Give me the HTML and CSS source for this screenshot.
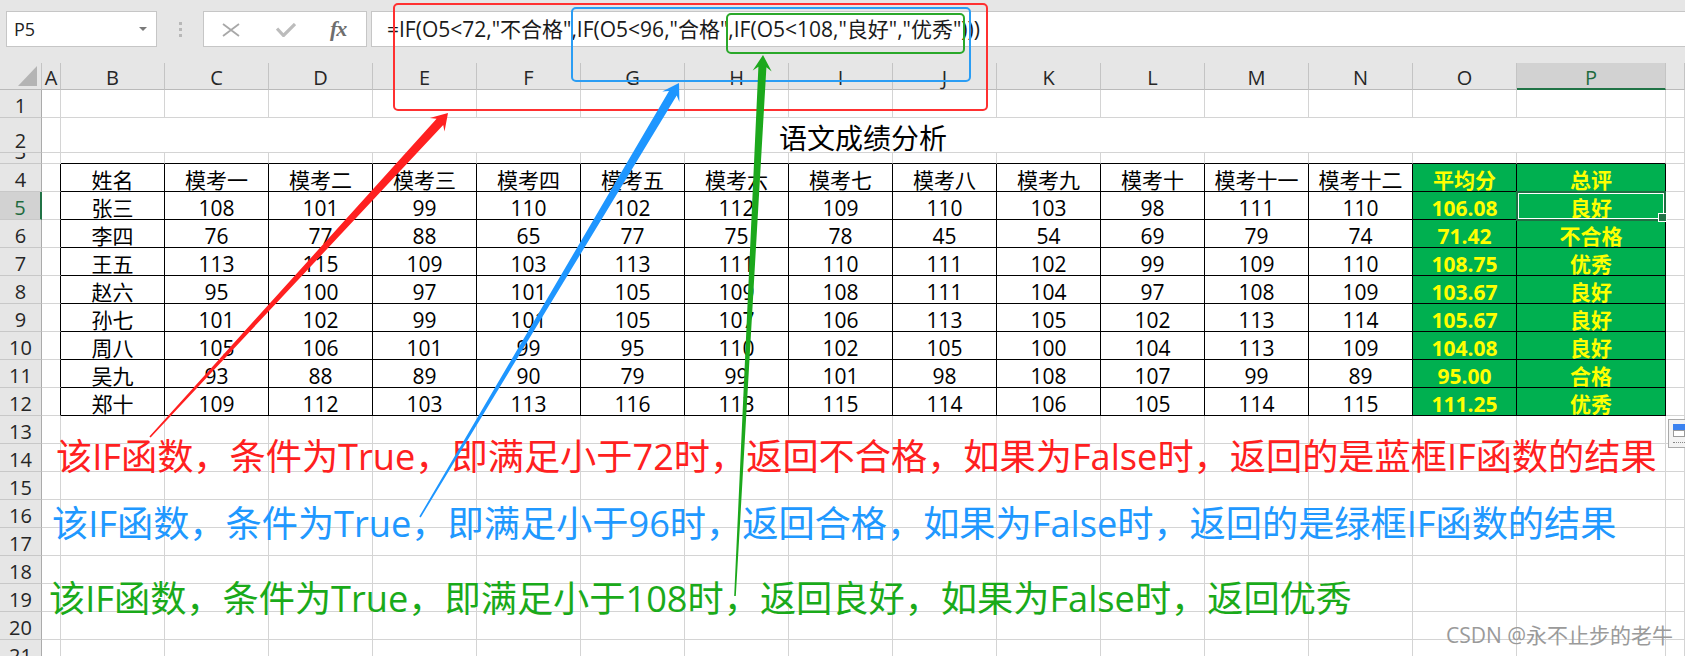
FILE: index.html
```html
<!DOCTYPE html>
<html lang="zh-CN">
<head>
<meta charset="utf-8">
<title>语文成绩分析</title>
<link rel="stylesheet" href="styles.css">
</head>
<body>
<div class="app">
  <div class="fbar">
    <div class="namebox"><span class="ref">P5</span><span class="dd"></span></div>
    <div class="grip"><span></span><span></span><span></span></div>
    <div class="fbtns">
      <svg class="ico-x" width="18" height="14" viewBox="0 0 18 14"><path d="M1 1 L17 13 M17 1 L1 13"/></svg>
      <svg class="ico-ok" width="20" height="14" viewBox="0 0 20 14"><path d="M1 5.5 L7.5 12.5 L19 1"/></svg>
      <span class="fx">fx</span>
    </div>
    <div class="finput">=IF(O5&lt;72,"不合格",IF(O5&lt;96,"合格",IF(O5&lt;108,"良好","优秀")))</div>
  </div>

  <div class="sheet">
    <div class="row hd">
      <div class="ch corner"></div>
      <div class="ch">A</div><div class="ch">B</div><div class="ch">C</div><div class="ch">D</div><div class="ch">E</div>
      <div class="ch">F</div><div class="ch">G</div><div class="ch">H</div><div class="ch">I</div><div class="ch">J</div>
      <div class="ch">K</div><div class="ch">L</div><div class="ch">M</div><div class="ch">N</div><div class="ch">O</div>
      <div class="ch sel">P</div><div class="ch"></div>
    </div>
    <div class="row"><div class="rh">1</div><i></i><i></i><i></i><i></i><i></i><i></i><i></i><i></i><i></i><i></i><i></i><i></i><i></i><i></i><i></i><i></i><i></i></div>
    <div class="row r2"><div class="rh">2</div><i></i><div class="title">语文成绩分析</div><i></i></div>
    <div class="row r3"><div class="rh">3</div><i></i><i class="bt"></i><i class="bt"></i><i class="bt"></i><i class="bt"></i><i class="bt"></i><i class="bt"></i><i class="bt"></i><i class="bt"></i><i class="bt"></i><i class="bt"></i><i class="bt"></i><i class="bt"></i><i class="bt"></i><i class="bt"></i><i class="bt"></i><i></i></div>
    <div class="row"><div class="rh">4</div><i class="br"></i><div class="t">姓名</div><div class="t">模考一</div><div class="t">模考二</div><div class="t">模考三</div><div class="t">模考四</div><div class="t">模考五</div><div class="t">模考六</div><div class="t">模考七</div><div class="t">模考八</div><div class="t">模考九</div><div class="t">模考十</div><div class="t">模考十一</div><div class="t">模考十二</div><div class="t g">平均分</div><div class="t g">总评</div><i></i></div>
    <div class="row"><div class="rh sel">5</div><i class="br"></i><div class="t">张三</div><div class="t">108</div><div class="t">101</div><div class="t">99</div><div class="t">110</div><div class="t">102</div><div class="t">112</div><div class="t">109</div><div class="t">110</div><div class="t">103</div><div class="t">98</div><div class="t">111</div><div class="t">110</div><div class="t g">106.08</div><div class="t g cur">良好</div><i></i></div>
    <div class="row"><div class="rh">6</div><i class="br"></i><div class="t">李四</div><div class="t">76</div><div class="t">77</div><div class="t">88</div><div class="t">65</div><div class="t">77</div><div class="t">75</div><div class="t">78</div><div class="t">45</div><div class="t">54</div><div class="t">69</div><div class="t">79</div><div class="t">74</div><div class="t g">71.42</div><div class="t g">不合格</div><i></i></div>
    <div class="row"><div class="rh">7</div><i class="br"></i><div class="t">王五</div><div class="t">113</div><div class="t">115</div><div class="t">109</div><div class="t">103</div><div class="t">113</div><div class="t">111</div><div class="t">110</div><div class="t">111</div><div class="t">102</div><div class="t">99</div><div class="t">109</div><div class="t">110</div><div class="t g">108.75</div><div class="t g">优秀</div><i></i></div>
    <div class="row"><div class="rh">8</div><i class="br"></i><div class="t">赵六</div><div class="t">95</div><div class="t">100</div><div class="t">97</div><div class="t">101</div><div class="t">105</div><div class="t">109</div><div class="t">108</div><div class="t">111</div><div class="t">104</div><div class="t">97</div><div class="t">108</div><div class="t">109</div><div class="t g">103.67</div><div class="t g">良好</div><i></i></div>
    <div class="row"><div class="rh">9</div><i class="br"></i><div class="t">孙七</div><div class="t">101</div><div class="t">102</div><div class="t">99</div><div class="t">101</div><div class="t">105</div><div class="t">107</div><div class="t">106</div><div class="t">113</div><div class="t">105</div><div class="t">102</div><div class="t">113</div><div class="t">114</div><div class="t g">105.67</div><div class="t g">良好</div><i></i></div>
    <div class="row"><div class="rh">10</div><i class="br"></i><div class="t">周八</div><div class="t">105</div><div class="t">106</div><div class="t">101</div><div class="t">99</div><div class="t">95</div><div class="t">110</div><div class="t">102</div><div class="t">105</div><div class="t">100</div><div class="t">104</div><div class="t">113</div><div class="t">109</div><div class="t g">104.08</div><div class="t g">良好</div><i></i></div>
    <div class="row"><div class="rh">11</div><i class="br"></i><div class="t">吴九</div><div class="t">93</div><div class="t">88</div><div class="t">89</div><div class="t">90</div><div class="t">79</div><div class="t">99</div><div class="t">101</div><div class="t">98</div><div class="t">108</div><div class="t">107</div><div class="t">99</div><div class="t">89</div><div class="t g">95.00</div><div class="t g">合格</div><i></i></div>
    <div class="row"><div class="rh">12</div><i class="br"></i><div class="t">郑十</div><div class="t">109</div><div class="t">112</div><div class="t">103</div><div class="t">113</div><div class="t">116</div><div class="t">113</div><div class="t">115</div><div class="t">114</div><div class="t">106</div><div class="t">105</div><div class="t">114</div><div class="t">115</div><div class="t g">111.25</div><div class="t g">优秀</div><i></i></div>
    <div class="row"><div class="rh">13</div><i></i><i></i><i></i><i></i><i></i><i></i><i></i><i></i><i></i><i></i><i></i><i></i><i></i><i></i><i></i><i></i><i></i></div>
    <div class="row"><div class="rh">14</div><i></i><i></i><i></i><i></i><i></i><i></i><i></i><i></i><i></i><i></i><i></i><i></i><i></i><i></i><i></i><i></i><i></i></div>
    <div class="row"><div class="rh">15</div><i></i><i></i><i></i><i></i><i></i><i></i><i></i><i></i><i></i><i></i><i></i><i></i><i></i><i></i><i></i><i></i><i></i></div>
    <div class="row"><div class="rh">16</div><i></i><i></i><i></i><i></i><i></i><i></i><i></i><i></i><i></i><i></i><i></i><i></i><i></i><i></i><i></i><i></i><i></i></div>
    <div class="row"><div class="rh">17</div><i></i><i></i><i></i><i></i><i></i><i></i><i></i><i></i><i></i><i></i><i></i><i></i><i></i><i></i><i></i><i></i><i></i></div>
    <div class="row"><div class="rh">18</div><i></i><i></i><i></i><i></i><i></i><i></i><i></i><i></i><i></i><i></i><i></i><i></i><i></i><i></i><i></i><i></i><i></i></div>
    <div class="row"><div class="rh">19</div><i></i><i></i><i></i><i></i><i></i><i></i><i></i><i></i><i></i><i></i><i></i><i></i><i></i><i></i><i></i><i></i><i></i></div>
    <div class="row"><div class="rh">20</div><i></i><i></i><i></i><i></i><i></i><i></i><i></i><i></i><i></i><i></i><i></i><i></i><i></i><i></i><i></i><i></i><i></i></div>
    <div class="row"><div class="rh">21</div><i></i><i></i><i></i><i></i><i></i><i></i><i></i><i></i><i></i><i></i><i></i><i></i><i></i><i></i><i></i><i></i><i></i></div>
  </div>

  <div class="note n1">该IF函数，条件为True，即满足小于72时，返回不合格，如果为False时，返回的是蓝框IF函数的结果</div>
  <div class="note n2">该IF函数，条件为True，即满足小于96时，返回合格，如果为False时，返回的是绿框IF函数的结果</div>
  <div class="note n3">该IF函数，条件为True，即满足小于108时，返回良好，如果为False时，返回优秀</div>

  <svg class="ann" width="1685" height="656" viewBox="0 0 1685 656">
    <rect class="box-red" x="394" y="4" width="593" height="106" rx="4"/>
    <rect class="box-blue" x="572" y="8" width="398" height="73" rx="4"/>
    <rect class="box-green" x="727" y="14" width="237" height="39" rx="4"/>
    <polygon class="arr-red" points="150.6,437.5 443.2,124.9 444.5,131.6 448,113 429.8,118 436.6,118.8 149.4,436.5"/>
    <polygon class="arr-blue" points="420.7,517.4 676.7,95.6 679.4,101.9 679,83 662.2,91.6 669,91 419.3,516.6"/>
    <polygon class="arr-green" points="735.8,596 766.4,67.2 771.7,71.5 763,55 752.7,70.5 758.4,66.8 734.2,596"/>
  </svg>

  <div class="wm">CSDN @永不止步的老牛</div>
  <div class="qa"><span class="qa-top"></span><span class="qa-mid"></span><span class="qa-dots"></span></div>
</div>
</body>
</html>
```

FILE: styles.css
```css
* { box-sizing: border-box; }
html, body { margin: 0; padding: 0; }
body {
  width: 1685px;
  height: 656px;
  overflow: hidden;
  background: #fff;
  font-family: "Open Sans", "Noto Sans CJK SC", sans-serif;
  color: #000;
}
.app { position: relative; width: 1685px; height: 656px; overflow: hidden; }

/* ---------- formula bar ---------- */
.fbar {
  height: 63px;
  background: #e6e6e6;
  display: flex;
  align-items: flex-start;
  padding: 11px 0 0 6px;
}
.namebox {
  width: 151px;
  height: 36px;
  background: #fff;
  border: 1px solid #c6c6c6;
  display: flex;
  align-items: center;
  justify-content: space-between;
  padding: 0 9px 0 7px;
  font-size: 18px;
  color: #222;
}
.dd {
  width: 0; height: 0;
  border-left: 4px solid transparent;
  border-right: 4px solid transparent;
  border-top: 4px solid #7a7a7a;
}
.grip {
  width: 46px;
  height: 36px;
  display: flex;
  flex-direction: column;
  align-items: center;
  justify-content: center;
  gap: 3px;
}
.grip span { width: 3px; height: 3px; background: #b8b8b8; }
.fbtns {
  width: 164px;
  height: 36px;
  background: #fff;
  border: 1px solid #c6c6c6;
  display: flex;
  align-items: center;
  padding-left: 18px;
}
.ico-x { margin-top: 2px; }
.ico-x path { stroke: #a8a8a8; stroke-width: 1.8; fill: none; }
.ico-ok { margin-left: 36px; margin-top: 1px; }
.ico-ok path { stroke: #bcbcbc; stroke-width: 3.2; fill: none; }
.fx {
  margin-left: 34px;
  font-family: "Liberation Serif", serif;
  font-style: italic;
  font-weight: 700;
  font-size: 22px;
  color: #6e6e6e;
  letter-spacing: -1px;
}
.finput {
  margin-left: 4px;
  flex: 1;
  height: 36px;
  background: #fff;
  border: 1px solid #c6c6c6;
  border-right: none;
  padding-left: 15px;
  font-size: 21px;
  line-height: 34px;
  color: #1a1a1a;
  white-space: nowrap;
}

/* ---------- sheet grid ---------- */
.sheet { display: flex; flex-direction: column; }
.row {
  display: grid;
  grid-template-columns: 42px 19px repeat(14, 104px) 149px 1fr;
  height: 28px;
  flex: none;
}
.row.hd { height: 27px; }
.row.r2 { height: 35px; }
.row.r3 { height: 11px; }
.row > * {
  border-right: 1px solid #d4d4d4;
  border-bottom: 1px solid #d4d4d4;
  display: flex;
  justify-content: center;
  align-items: flex-end;
  line-height: 1;
  white-space: nowrap;
  font-style: normal;
  min-width: 0;
}
.row.r3 > * { overflow: hidden; }
.ch {
  background: #e6e6e6;
  border-right-color: #c4c4c4;
  border-bottom-color: #bababa;
  font-size: 20px;
  color: #262626;
  padding-bottom: 1px;
}
.ch.sel {
  background: #d2d2d2;
  color: #1e6b3f;
  border-bottom: 2px solid #217346;
  padding-bottom: 0;
}
.corner { position: relative; }
.corner::after {
  content: "";
  position: absolute;
  right: 4px;
  bottom: 3px;
  width: 19px;
  height: 20px;
  background: #b4b4b4;
  clip-path: polygon(100% 0, 100% 100%, 0 100%);
}
.rh {
  background: #e6e6e6;
  border-right-color: #ababab;
  border-bottom-color: #c8c8c8;
  font-size: 20px;
  color: #262626;
  padding-bottom: 1px;
}
.rh.sel {
  background: #d2d2d2;
  color: #1e6b3f;
  border-right: 2px solid #217346;
}
.title {
  grid-column: span 15;
  font-size: 28px;
  color: #000;
}
.bt { border-bottom-color: #000; }
.br { border-right-color: #000; }
.t {
  border-right-color: #000;
  border-bottom-color: #000;
  font-size: 21px;
  color: #000;
}
.g {
  background: #00b050;
  color: #ffff00;
  font-weight: 700;
}
.cur { position: relative; z-index: 2; }
.cur::after {
  content: "";
  position: absolute;
  left: -1px; top: -1px; right: -1px; bottom: -2px;
  border: 2px solid #1f6f43;
  box-shadow: inset 0 0 0 1px #fff;
  z-index: 1;
}
.cur::before {
  content: "";
  position: absolute;
  right: -2px;
  bottom: -3px;
  width: 7px;
  height: 7px;
  background: #217346;
  border: 1px solid #fff;
  z-index: 2;
}

/* ---------- annotations ---------- */
.note {
  position: absolute;
  font-size: 36.2px;
  line-height: 1;
  white-space: nowrap;
}
.n1 { left: 56px; top: 438px; color: #ff2020; }
.n2 { left: 52px; top: 505px; color: #2098ff; }
.n3 { left: 49px; top: 580px; color: #1aaa1a; }

.ann { position: absolute; left: 0; top: 0; pointer-events: none; }
.box-red { fill: none; stroke: #ff3030; stroke-width: 2; }
.box-blue { fill: none; stroke: #2a9df4; stroke-width: 2; }
.box-green { fill: none; stroke: #2aa82a; stroke-width: 2; }
.arr-red { fill: #ff2020; }
.arr-blue { fill: #1e96ff; }
.arr-green { fill: #1ca81c; }

.wm {
  position: absolute;
  left: 1446px;
  top: 625px;
  font-size: 21px;
  line-height: 1;
  color: #9a9a9a;
  white-space: nowrap;
}
.qa {
  position: absolute;
  left: 1668px;
  top: 419px;
  width: 22px;
  height: 29px;
  border: 1px solid #a9a9a9;
  background: #f3f3f3;
  display: flex;
  flex-direction: column;
  padding: 4px 0 0 4px;
}
.qa-top { width: 12px; height: 6px; background: #3b82f0; }
.qa-mid { width: 12px; height: 7px; background: #fff; border: 1px solid #9a9a9a; }
.qa-dots { width: 12px; height: 0; margin-top: 5px; border-top: 1px dotted #888; }
```
